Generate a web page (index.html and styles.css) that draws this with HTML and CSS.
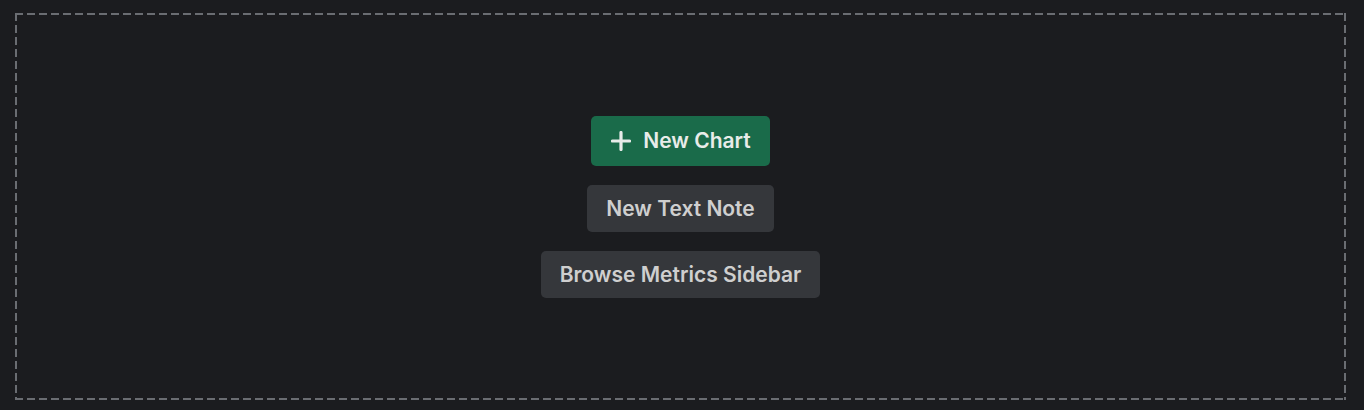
FILE: index.html
```html
<!DOCTYPE html>
<html>
<head>
<meta charset="utf-8">
<link rel="stylesheet" href="styles.css">
</head>
<body>
<div class="dropzone">
  <div class="actions">
    <button class="btn btn-primary">
      <svg class="plus" width="20" height="20" viewBox="0 0 20 20"><path d="M10 1.5v17M1.5 10h17" stroke="currentColor" stroke-width="3.2" stroke-linecap="round"/></svg>
      <span>New Chart</span>
    </button>
    <button class="btn btn-secondary">New Text Note</button>
    <button class="btn btn-secondary">Browse Metrics Sidebar</button>
  </div>
</div>
</body>
</html>
```
FILE: styles.css
```css
html, body {
  margin: 0;
  height: 100%;
  background: #1b1c1f;
}
body {
  padding: 13px 18px 10px 15px;
  box-sizing: border-box;
  font-family: Inter, "Noto Sans", sans-serif;
}
.dropzone {
  height: 387px;
  box-sizing: border-box;
  display: flex;
  align-items: center;
  justify-content: center;
  background:
    repeating-linear-gradient(90deg, #6a6d72 0 8px, transparent 8px 12px) top left / 100% 2px no-repeat,
    repeating-linear-gradient(90deg, #6a6d72 0 8px, transparent 8px 12px) bottom left / 100% 2px no-repeat,
    repeating-linear-gradient(180deg, #6a6d72 0 8px, transparent 8px 12px) top left / 2px 100% no-repeat,
    repeating-linear-gradient(180deg, #6a6d72 0 8px, transparent 8px 12px) top right / 2px 100% no-repeat;
}
.actions {
  display: flex;
  flex-direction: column;
  align-items: center;
  gap: 19px;
}
.btn {
  border: none;
  border-radius: 5px;
  font-family: inherit;
  font-size: 21px;
  font-weight: 600;
  letter-spacing: 0;
  height: 47px;
  padding: 0 19px;
  display: flex;
  align-items: center;
}
.btn-primary {
  height: 50px;
  background: #1a6b4a;
  color: #e8ece9;
  gap: 12px;
  padding: 0 19px 0 20px;
}
.btn-secondary {
  background: #35373b;
  color: #cfcfcf;
}
.plus {
  display: block;
}
```
